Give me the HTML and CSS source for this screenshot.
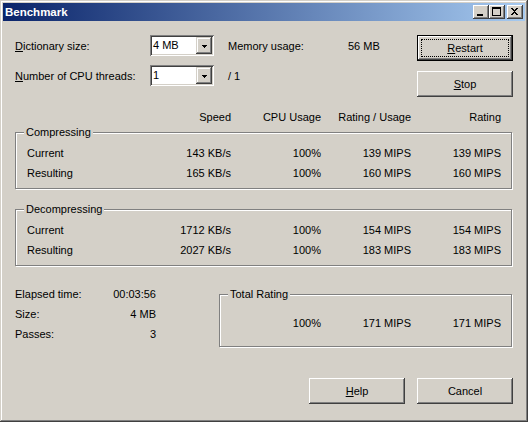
FILE: index.html
```html
<!DOCTYPE html>
<html>
<head>
<meta charset="utf-8">
<link rel="stylesheet" href="styles.css">
</head>
<body>
<div class="window">
  <div class="titlebar">
    <span class="title">Benchmark</span>
    <div class="tbtns">
      <span class="tbtn"><svg width="16" height="14" viewBox="0 0 16 14"><rect x="4" y="9" width="6" height="2" fill="#000"/></svg></span>
      <span class="tbtn"><svg width="16" height="14" viewBox="0 0 16 14"><rect x="3.5" y="2.5" width="8" height="8" fill="none" stroke="#000"/><rect x="3" y="3" width="9" height="1" fill="#000"/></svg></span>
      <span class="tbtn close"><svg width="16" height="14" viewBox="0 0 16 14" shape-rendering="crispEdges"><path d="M4 3h2v1h1v1h1v-1h1v-1h2v1h-1v1h-1v1h-1v1h1v1h1v1h1v1h-2v-1h-1v-1h-1v1h-1v1h-2v-1h1v-1h1v-1h1v-1h-1v-1h-1v-1h-1z" fill="#000"/></svg></span>
    </div>
  </div>
  <div class="client">
    <div class="top">
      <div class="settings">
        <span class="lbl"><u>D</u>ictionary size:</span>
        <div class="combo"><span class="ctext">4 MB</span><span class="drop"><svg width="5" height="3" viewBox="0 0 5 3" shape-rendering="crispEdges"><path d="M0 0h5v1h-1v1h-1v1h-1v-1h-1v-1h-1z" fill="#000"/></svg></span></div>
        <span class="c3">Memory usage:</span>
        <span class="c4">56 MB</span>
        <span class="lbl"><u>N</u>umber of CPU threads:</span>
        <div class="combo"><span class="ctext">1</span><span class="drop"><svg width="5" height="3" viewBox="0 0 5 3" shape-rendering="crispEdges"><path d="M0 0h5v1h-1v1h-1v1h-1v-1h-1v-1h-1z" fill="#000"/></svg></span></div>
        <span class="c3">/ 1</span>
        <span class="c4"></span>
      </div>
      <div class="actions">
        <div class="btn default"><span><u>R</u>estart</span></div>
        <div class="btn"><span><u>S</u>top</span></div>
      </div>
    </div>

    <div class="cols header">
      <span></span><span>Speed</span><span>CPU Usage</span><span>Rating / Usage</span><span>Rating</span>
    </div>

    <div class="group">
      <span class="legend">Compressing</span>
      <div class="cols">
        <span class="name">Current</span><span>143 KB/s</span><span>100%</span><span>139 MIPS</span><span>139 MIPS</span>
      </div>
      <div class="cols">
        <span class="name">Resulting</span><span>165 KB/s</span><span>100%</span><span>160 MIPS</span><span>160 MIPS</span>
      </div>
    </div>

    <div class="group second">
      <span class="legend">Decompressing</span>
      <div class="cols">
        <span class="name">Current</span><span>1712 KB/s</span><span>100%</span><span>154 MIPS</span><span>154 MIPS</span>
      </div>
      <div class="cols">
        <span class="name">Resulting</span><span>2027 KB/s</span><span>100%</span><span>183 MIPS</span><span>183 MIPS</span>
      </div>
    </div>

    <div class="bottom">
      <div class="stats">
        <span>Elapsed time:</span><span class="v">00:03:56</span>
        <span>Size:</span><span class="v">4 MB</span>
        <span>Passes:</span><span class="v">3</span>
      </div>
      <div class="group total">
        <span class="legend">Total Rating</span>
        <div class="tcols">
          <span></span><span>100%</span><span>171 MIPS</span><span>171 MIPS</span>
        </div>
      </div>
    </div>

    <div class="footer">
      <div class="btn"><span><u>H</u>elp</span></div>
      <div class="btn"><span>Cancel</span></div>
    </div>
  </div>
</div>
</body>
</html>
```

FILE: styles.css
```css
html, body {
  margin: 0;
  padding: 0;
}
body {
  width: 528px;
  height: 422px;
  overflow: hidden;
  background: #D4D0C8;
  font-family: "Liberation Sans", Arial, sans-serif;
  font-size: 11px;
  color: #000;
}
u { text-decoration: underline; text-underline-offset: 1px; }

.window {
  width: 528px;
  height: 422px;
  box-sizing: border-box;
  padding: 3px;
  background: #D4D0C8;
  box-shadow: inset -1px -1px #404040, inset 1px 1px #D4D0C8, inset -2px -2px #808080, inset 2px 2px #fff;
  display: flex;
  flex-direction: column;
}

.titlebar {
  height: 18px;
  flex: none;
  background: linear-gradient(90deg, #0A246A, #A6CAF0);
  display: flex;
  align-items: center;
  padding: 0 2px;
  color: #fff;
  font-weight: bold;
  font-size: 11.5px;
}
.title { flex: 1; line-height: 18px; }
.tbtns { display: flex; }
.tbtn {
  width: 16px;
  height: 14px;
  background: #D4D0C8;
  box-shadow: inset -1px -1px #404040, inset 1px 1px #fff, inset -2px -2px #808080, inset 2px 2px #D4D0C8;
  display: block;
}
.tbtn svg { display: block; }
.tbtn.close { margin-left: 2px; }

.client {
  flex: 1;
  padding: 14px 12px 0 12px;
}

.top { display: flex; }
.settings {
  display: grid;
  grid-template-columns: 135px 64px 134px 69px;
  grid-template-rows: 21px 21px;
  row-gap: 9px;
  align-items: center;
}
.c3 { padding-left: 14px; }

.combo {
  width: 64px;
  height: 21px;
  box-sizing: border-box;
  background: #fff;
  box-shadow: inset 1px 1px #808080, inset -1px -1px #fff, inset 2px 2px #404040, inset -2px -2px #D4D0C8;
  display: flex;
  padding: 2px;
}
.ctext { flex: 1; padding-left: 1px; line-height: 17px; }
.drop {
  width: 16px;
  height: 17px;
  background: #D4D0C8;
  box-shadow: inset -1px -1px #404040, inset 1px 1px #D4D0C8, inset -2px -2px #808080, inset 2px 2px #fff;
  display: flex;
  align-items: center;
  justify-content: center;
}
.drop svg { display: block; margin-top: 1px; }

.actions {
  display: flex;
  flex-direction: column;
  gap: 10px;
}
.btn {
  width: 96px;
  height: 26px;
  box-sizing: border-box;
  background: #D4D0C8;
  box-shadow: inset -1px -1px #404040, inset 1px 1px #fff, inset -2px -2px #808080, inset 2px 2px #D4D0C8;
  display: flex;
  align-items: center;
  justify-content: center;
}
.btn.default {
  border: 1px solid #000;
  outline: 1px dotted #000;
  outline-offset: -5px;
}

.cols {
  display: grid;
  grid-template-columns: 1fr 81px 90px 90px 90px;
  height: 20px;
  align-items: center;
  text-align: right;
}
.cols .name { text-align: left; }
.header {
  margin-top: 12px;
  height: 16px;
  padding-right: 12px;
}

.group {
  position: relative;
  border: 1px solid #808080;
  box-shadow: inset 1px 1px #fff, 1px 1px #fff;
  margin-right: 1px;
  margin-top: 7px;
  padding: 10px 10px 5px 11px;
}
.group.second { margin-top: 20px; }
.legend {
  position: absolute;
  left: 8px;
  top: -7px;
  line-height: 13px;
  padding: 0 2px;
  background: #D4D0C8;
}

.bottom {
  display: flex;
  margin-top: 18px;
  align-items: flex-start;
}
.stats {
  width: 141px;
  display: grid;
  grid-template-columns: 1fr auto;
  grid-auto-rows: 20px;
  align-items: center;
}
.stats .v { text-align: right; }
.group.total {
  flex: 1;
  margin-left: 63px;
  margin-top: 10px;
  padding: 18px 10px 13px 0;
}
.tcols {
  display: grid;
  grid-template-columns: 1fr 90px 90px 90px;
  height: 20px;
  align-items: center;
  text-align: right;
}

.footer {
  display: flex;
  justify-content: flex-end;
  gap: 12px;
  margin-top: 31px;
}
```
